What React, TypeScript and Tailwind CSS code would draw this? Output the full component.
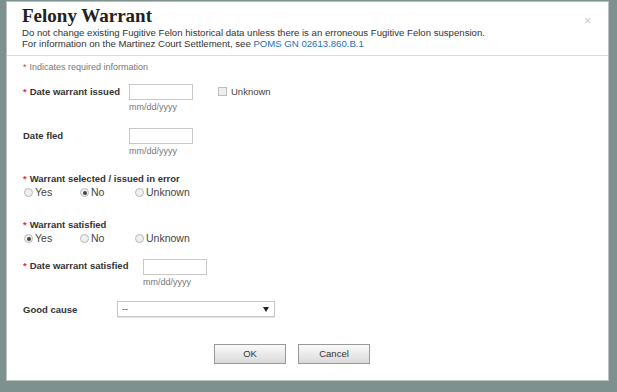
const sans = { fontFamily: '"Liberation Sans", Arial, sans-serif' };

const Req = () => <span className="text-[#e0343c] mr-[3px]">*</span>;

const DateField = () => (
  <div className="flex flex-col">
    <div className="w-[64px] h-[16px] border border-[#c8c8c8] bg-white" />
    <div className="text-[9px] leading-[11px] text-[#777] mt-[2px]">mm/dd/yyyy</div>
  </div>
);

const Radio = ({ label, checked, w }: { label: string; checked?: boolean; w: string }) => (
  <div className={`flex items-center gap-[2px] h-[11px] ${w}`}>
    <span className="w-[9px] h-[9px] rounded-full border border-[#b8b8b8] bg-[#f0f0f0] flex items-center justify-center">
      {checked && <span className="w-[4px] h-[4px] rounded-full bg-[#444]" />}
    </span>
    <span className="text-[10.5px] leading-[11px] text-[#444]">{label}</span>
  </div>
);

const Label = ({ children, w, pt = 'pt-0' }: { children: React.ReactNode; w?: string; pt?: string }) => (
  <div className={`text-[9.5px] leading-[11px] font-bold text-[#333] ${w ?? ''} ${pt}`}>{children}</div>
);

const App = () => {
  return (
    <div className="w-[617px] h-[392px] bg-[#7d918f] overflow-hidden" style={sans}>
      <div className="ml-[6px] mt-[1px] w-[603px] h-[380px] bg-white border border-[#b9c2c1] flex flex-col">
        {/* Header */}
        <div className="relative px-[15px] pt-[3px] h-[54px] border-b border-[#dcdcdc]">
          <h1
            className="text-[19px] leading-[22px] font-bold text-[#222]"
            style={{ fontFamily: '"Liberation Serif", "Times New Roman", serif' }}
          >
            Felony Warrant
          </h1>
          <p className="text-[9.6px] leading-[11px] text-[#333]">
            Do not change existing Fugitive Felon historical data unless there is an erroneous Fugitive Felon suspension.
          </p>
          <p className="text-[9.6px] leading-[11px] text-[#333]">
            For information on the Martinez Court Settlement, see{' '}
            <span className="text-[#2a6ebb]">POMS GN 02613.860.B.1</span>
          </p>
          <span className="absolute right-[17px] top-[10px] text-[12px] text-[#c4c4c4]">×</span>
        </div>

        {/* Body */}
        <div className="px-[16px] pt-[6px] flex flex-col">
          <div className="text-[9px] leading-[11px] text-[#777]">
            <Req />Indicates required information
          </div>

          <div className="flex mt-[11px]">
            <Label w="w-[106px]" pt="pt-[2px]">
              <Req />Date warrant issued
            </Label>
            <DateField />
            <div className="flex items-center gap-[4px] ml-[25px] h-[15px]">
              <span className="w-[9px] h-[9px] border border-[#bdbdbd] bg-[#eee]" />
              <span className="text-[9.5px] leading-[11px] text-[#444]">Unknown</span>
            </div>
          </div>

          <div className="flex mt-[15px]">
            <Label w="w-[106px]" pt="pt-[2px]">Date fled</Label>
            <DateField />
          </div>

          <div className="mt-[16px]">
            <Label>
              <Req />Warrant selected / issued in error
            </Label>
          </div>
          <div className="flex mt-[3px] pl-[1px]">
            <Radio label="Yes" w="w-[56px]" />
            <Radio label="No" checked w="w-[55px]" />
            <Radio label="Unknown" w="w-[80px]" />
          </div>

          <div className="mt-[21px]">
            <Label>
              <Req />Warrant satisfied
            </Label>
          </div>
          <div className="flex mt-[3px] pl-[1px]">
            <Radio label="Yes" checked w="w-[56px]" />
            <Radio label="No" w="w-[55px]" />
            <Radio label="Unknown" w="w-[80px]" />
          </div>

          <div className="flex mt-[15px]">
            <Label w="w-[120px]" pt="pt-[1px]">
              <Req />Date warrant satisfied
            </Label>
            <DateField />
          </div>

          <div className="flex items-center mt-[13px]">
            <Label w="w-[94px]">Good cause</Label>
            <div className="w-[158px] h-[16px] border border-[#c8c8c8] bg-white flex items-center justify-between pl-[4px] pr-[5px] shadow-[0_1px_1px_rgba(0,0,0,0.1)]">
              <span className="text-[9px] leading-none text-[#444]">--</span>
              <svg width="6" height="5" viewBox="0 0 6 5">
                <path d="M0 0h6L3 5z" fill="#222" />
              </svg>
            </div>
          </div>

          <div className="flex gap-[12px] mt-[27px] ml-[191px]">
            <button className="w-[72px] h-[20px] border border-[#9a9a9a] bg-gradient-to-b from-[#fafafa] to-[#dadada] text-[9.5px] text-[#333]">
              OK
            </button>
            <button className="w-[72px] h-[20px] border border-[#9a9a9a] bg-gradient-to-b from-[#fafafa] to-[#dadada] text-[9.5px] text-[#333]">
              Cancel
            </button>
          </div>
        </div>
      </div>
    </div>
  );
};

export default App;
